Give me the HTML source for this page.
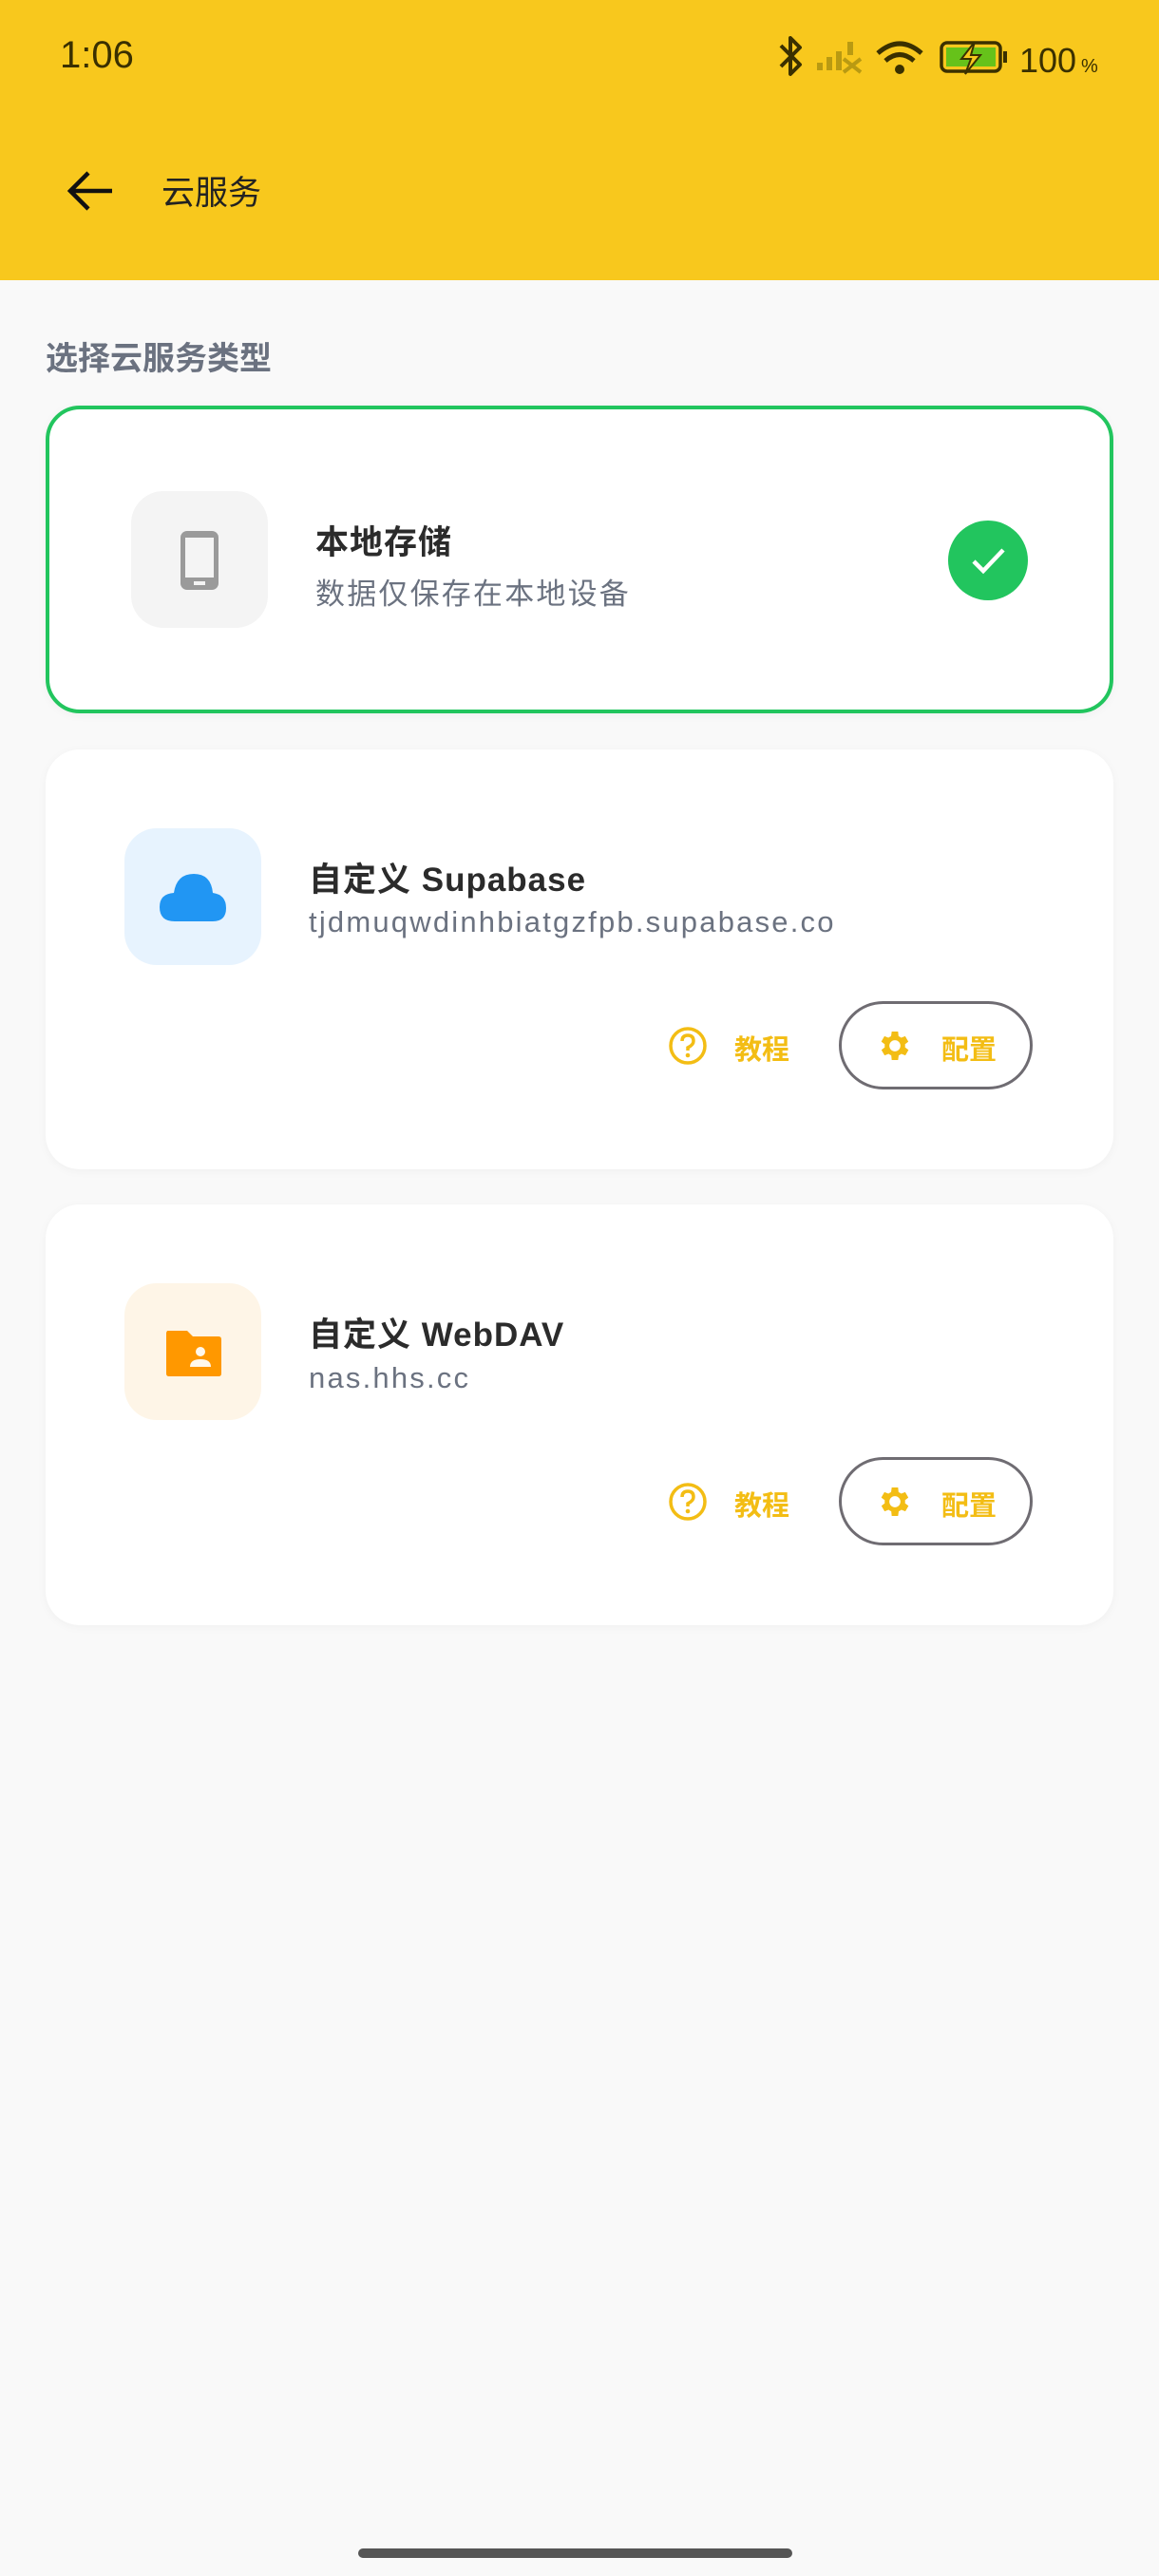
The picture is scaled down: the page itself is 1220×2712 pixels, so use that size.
<!DOCTYPE html>
<html><head><meta charset="utf-8"><style>
*{margin:0;padding:0;box-sizing:border-box}
body{width:1220px;height:2712px;background:#f9f9f9;font-family:"Liberation Sans","Noto Sans CJK SC",sans-serif;position:relative;overflow:hidden}
.abs{position:absolute}
.hdr{left:0;top:0;width:1220px;height:295px;background:#f8c81d}
.card{position:absolute;left:48px;width:1124px;background:#fff;border-radius:36px;box-shadow:0 2px 10px rgba(0,0,0,0.04)}
.ib{position:absolute;width:144px;height:144px;border-radius:34px}
.t{position:absolute;font-size:35px;font-weight:bold;color:#2b2b2b;white-space:nowrap;letter-spacing:1px}
.s{position:absolute;font-size:31px;color:#6b7280;white-space:nowrap;letter-spacing:2.2px}
.btn{position:absolute;width:204px;height:93px;border:3px solid #6f6c72;border-radius:47px}
.y{color:#f3bd14;font-size:29px;font-weight:bold;position:absolute;white-space:nowrap}
</style></head><body>
<div class="abs hdr"></div>
<div class="abs" style="left:63px;top:36px;font-size:40px;color:#3a3000">1:06</div>
<svg class="abs" style="left:815px;top:36px" width="350" height="50" viewBox="815 36 350 50">
<path d="M822 48 L842 68 L832 78 L832 40 L842 50 L822 70" fill="none" stroke="#3a3000" stroke-width="4" stroke-linejoin="round"/>
<g fill="#b99a12"><rect x="860" y="66" width="6" height="8"/><rect x="870" y="60" width="6" height="14"/><rect x="880" y="54" width="6" height="20"/><rect x="892" y="44" width="6" height="14"/></g>
<path d="M888 62 L906 76 M906 62 L888 76" stroke="#b99a12" stroke-width="4"/>
<path d="M924 56 Q947 36 970 56" fill="none" stroke="#3a3000" stroke-width="5"/>
<path d="M932 64 Q947 51 962 64" fill="none" stroke="#3a3000" stroke-width="5"/>
<circle cx="947" cy="73" r="5" fill="#3a3000"/>
<rect x="991" y="45" width="62" height="30" rx="6" fill="none" stroke="#3a3000" stroke-width="3.5"/>
<rect x="996" y="50" width="52" height="20" fill="#66c21a"/>
<rect x="1056" y="54" width="4" height="12" fill="#3a3000"/>
<path d="M1026 44 L1012 62 L1022 62 L1016 78 L1032 58 L1022 58 Z" fill="#f8c81d" stroke="#3a3000" stroke-width="2"/>
<text x="1073" y="76" font-family="Liberation Sans" font-size="36" fill="#3a3000">100</text>
<text x="1138" y="76" font-family="Liberation Sans" font-size="20" fill="#3a3000">%</text>
</svg>
<svg class="abs" style="left:70px;top:178px" width="50" height="46" viewBox="0 0 50 46"><path d="M48 23 H5 M23 4 L4 23 L23 42" fill="none" stroke="#111" stroke-width="4.5"/></svg>
<div class="abs" style="left:170px;top:175px;font-size:35px;color:#222">云服务</div>
<div class="abs" style="left:48px;top:350px;font-size:34px;font-weight:bold;color:#6b7280">选择云服务类型</div>

<div class="card" style="top:427px;height:324px;border:4px solid #22c55e"></div>
<div class="ib" style="left:138px;top:517px;background:#f4f4f4"></div>
<svg class="abs" style="left:188px;top:557px" width="44" height="66" viewBox="0 0 44 66"><rect x="2" y="2" width="40" height="62" rx="7" fill="#9a9a9a"/><rect x="7" y="9" width="30" height="42" fill="#f4f4f4"/><rect x="16" y="55" width="12" height="4" fill="#f4f4f4"/></svg>
<div class="t" style="left:332px;top:543px">本地存储</div>
<div class="s" style="left:332px;top:600px">数据仅保存在本地设备</div>
<svg class="abs" style="left:998px;top:548px" width="84" height="84" viewBox="0 0 84 84"><circle cx="42" cy="42" r="42" fill="#22c55e"/><path d="M27 43 L37 53 L58 31" fill="none" stroke="#fff" stroke-width="4.5"/></svg>

<div class="card" style="top:789px;height:442px"></div>
<div class="ib" style="left:131px;top:872px;background:#e7f3fe"></div>
<svg class="abs" style="left:166px;top:918px" width="76" height="54" viewBox="0 0 76 54"><path d="M18 52 Q2 52 2 37 Q2 23 17 22 Q20 2 38 2 Q56 2 58 22 Q72 24 72 38 Q72 52 58 52 Z" fill="#2196f3"/></svg>
<div class="t" style="left:325px;top:898px">自定义 Supabase</div>
<div class="s" style="left:325px;top:953px">tjdmuqwdinhbiatgzfpb.supabase.co</div>
<svg class="abs" style="left:703px;top:1080px" width="42" height="42" viewBox="0 0 42 42"><circle cx="21" cy="21" r="18" fill="none" stroke="#f3bd14" stroke-width="3.5"/><path d="M15 16 Q15 10 21 10 Q27 10 27 16 Q27 20 21 23 V26" fill="none" stroke="#f3bd14" stroke-width="3.5"/><circle cx="21" cy="31" r="2.3" fill="#f3bd14"/></svg>
<div class="y" style="left:773px;top:1082px">教程</div>
<div class="btn" style="left:883px;top:1054px"></div>
<svg class="abs" style="left:922px;top:1081px" width="40" height="40" viewBox="0 0 24 24"><path fill="#f3bd14" d="M19.4 13a7.5 7.5 0 000-2l2.1-1.6-2-3.5-2.5 1a7.3 7.3 0 00-1.7-1L15 3h-4l-.4 2.9a7.3 7.3 0 00-1.7 1l-2.5-1-2 3.5L6.6 11a7.5 7.5 0 000 2l-2.1 1.6 2 3.5 2.5-1c.5.4 1.1.7 1.7 1L11 21h4l.4-2.9c.6-.3 1.2-.6 1.7-1l2.5 1 2-3.5zM13 15.5a3.5 3.5 0 110-7 3.5 3.5 0 010 7z" transform="translate(-1 0)"/></svg>
<div class="y" style="left:991px;top:1082px">配置</div>

<div class="card" style="top:1268px;height:443px"></div>
<div class="ib" style="left:131px;top:1351px;background:#fef5e7"></div>
<svg class="abs" style="left:173px;top:1399px" width="62" height="52" viewBox="0 0 62 52"><path d="M3 2 H24 L30 8 H57 Q60 8 60 11 V47 Q60 50 57 50 H5 Q2 50 2 47 V4 Z" fill="#ff9800"/><circle cx="38" cy="24" r="5" fill="#fff8ec"/><path d="M27 40 Q27 32 38 32 Q49 32 49 40 Z" fill="#fff8ec"/></svg>
<div class="t" style="left:325px;top:1377px">自定义 WebDAV</div>
<div class="s" style="left:325px;top:1433px">nas.hhs.cc</div>
<svg class="abs" style="left:703px;top:1560px" width="42" height="42" viewBox="0 0 42 42"><circle cx="21" cy="21" r="18" fill="none" stroke="#f3bd14" stroke-width="3.5"/><path d="M15 16 Q15 10 21 10 Q27 10 27 16 Q27 20 21 23 V26" fill="none" stroke="#f3bd14" stroke-width="3.5"/><circle cx="21" cy="31" r="2.3" fill="#f3bd14"/></svg>
<div class="y" style="left:773px;top:1562px">教程</div>
<div class="btn" style="left:883px;top:1534px"></div>
<svg class="abs" style="left:922px;top:1561px" width="40" height="40" viewBox="0 0 24 24"><path fill="#f3bd14" d="M19.4 13a7.5 7.5 0 000-2l2.1-1.6-2-3.5-2.5 1a7.3 7.3 0 00-1.7-1L15 3h-4l-.4 2.9a7.3 7.3 0 00-1.7 1l-2.5-1-2 3.5L6.6 11a7.5 7.5 0 000 2l-2.1 1.6 2 3.5 2.5-1c.5.4 1.1.7 1.7 1L11 21h4l.4-2.9c.6-.3 1.2-.6 1.7-1l2.5 1 2-3.5zM13 15.5a3.5 3.5 0 110-7 3.5 3.5 0 010 7z" transform="translate(-1 0)"/></svg>
<div class="y" style="left:991px;top:1562px">配置</div>

<div class="abs" style="left:377px;top:2683px;width:457px;height:10px;border-radius:5px;background:#555"></div>
</body></html>
